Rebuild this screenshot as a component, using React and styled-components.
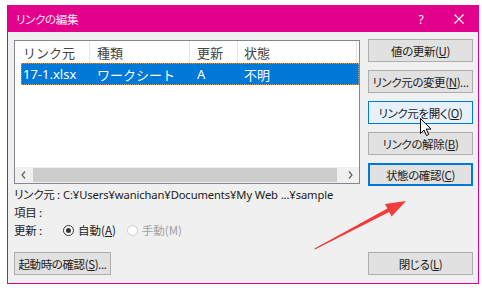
import React from "react";
import styled, { createGlobalStyle } from "styled-components";

const Global = createGlobalStyle`
  html, body { margin: 0; padding: 0; background: #ffffff; }
  body { width: 482px; height: 288px; overflow: hidden; font-family: "Noto Sans", "Noto Sans CJK JP", sans-serif; }
  * { box-sizing: border-box; }
`;

const Page = styled.div`
  position: relative;
  width: 482px;
  height: 288px;
  padding: 5px 3px 0 7px;
`;

const Dialog = styled.div`
  width: 472px;
  height: 279px;
  border: 1px solid #e3008c;
  display: flex;
  flex-direction: column;
  background: #f0f0f0;
`;

const TitleBar = styled.div`
  height: 26px;
  flex: none;
  background: #e3008c;
  display: flex;
  align-items: center;
  padding: 0 4px 0 8px;
`;

const Title = styled.div`
  flex: 1;
  color: #ffe8f5;
  font-family: "Noto Sans CJK JP", sans-serif;
  font-feature-settings: "palt";
  font-size: 11.5px;
  letter-spacing: -0.3px;
`;

const TitleButton = styled.div`
  width: 30px;
  height: 26px;
  display: flex;
  align-items: center;
  justify-content: center;
  color: #ffffff;
  font-family: "Noto Sans", sans-serif;
  font-size: 12px;
  margin-left: ${(p) => p.$gap || 0}px;
`;

const Body = styled.div`
  flex: 1;
  display: flex;
  gap: 8px;
  padding: 7px 5px 8px 6px;
`;

const LeftCol = styled.div`
  width: 346px;
  display: flex;
  flex-direction: column;
`;

const RightCol = styled.div`
  width: 105px;
  display: flex;
  flex-direction: column;
  gap: 8px;
`;

const ListBox = styled.div`
  margin-top: 1px;
  height: 144px;
  border: 1px solid #828790;
  background: #ffffff;
  display: flex;
  flex-direction: column;
  font-family: "Noto Sans", "Noto Sans CJK JP", sans-serif;
  font-size: 13px;
`;

const HeaderRow = styled.div`
  display: grid;
  grid-template-columns: 75px 100px 48px 119px;
  height: 22px;
  flex: none;
`;

const HeaderCell = styled.div`
  padding-left: ${(p) => p.$pad}px;
  border-right: 1px solid #e5e5e5;
  color: #444444;
  display: flex;
  align-items: center;
  white-space: nowrap;
`;

const DataRow = styled.div`
  display: grid;
  grid-template-columns: 69px 100px 48px 119px;
  height: 22px;
  margin-left: 6px;
  flex: none;
  background: #0078d7;
  outline: 1px dotted #c8955a;
  outline-offset: -1px;
  color: #ffffff;
`;

const DataCell = styled.div`
  padding-left: ${(p) => p.$pad}px;
  display: flex;
  align-items: center;
  white-space: nowrap;
`;

const Spacer = styled.div`
  flex: 1;
`;

const HScroll = styled.div`
  height: 16px;
  flex: none;
  display: flex;
  align-items: center;
  background: #f0f0f0;
`;

const ScrollArrow = styled.div`
  width: 17px;
  height: 16px;
  display: flex;
  align-items: center;
  justify-content: center;
  flex: none;
`;

const ScrollThumb = styled.div`
  height: 14px;
  width: 304px;
  margin-left: 1px;
  background: #cdcdcd;
`;

const Info = styled.div`
  margin-top: 1px;
  display: flex;
  flex-direction: column;
  font-size: 12px;
  color: #1a1a1a;
`;

const InfoRow = styled.div`
  height: 18px;
  display: flex;
  align-items: center;
  white-space: nowrap;
`;

const Label = styled.span`
  width: 49px;
  flex: none;
  font-family: "Noto Sans CJK JP", sans-serif;
  font-feature-settings: "palt";
  font-size: 11.5px;
  letter-spacing: -0.2px;
`;

const PathText = styled.span`
  font-family: "Noto Sans", "Noto Sans CJK JP", sans-serif;
  font-size: 11.2px;
  letter-spacing: -0.1px;
`;

const Radio = styled.span`
  width: 11px;
  height: 11px;
  border-radius: 50%;
  border: 1px solid ${(p) => (p.$disabled ? "#cccccc" : "#333333")};
  background: #ffffff;
  display: flex;
  align-items: center;
  justify-content: center;
  flex: none;
  margin-left: ${(p) => p.$ml || 0}px;
  &::after {
    content: "";
    width: 5px;
    height: 5px;
    border-radius: 50%;
    background: ${(p) => (p.$checked ? "#333333" : "transparent")};
  }
`;

const RadioText = styled.span`
  margin-left: 4px;
  font-family: "Noto Sans CJK JP", sans-serif;
  font-feature-settings: "palt";
  font-size: 11.5px;
  color: ${(p) => (p.$disabled ? "#a0a0a0" : "#1a1a1a")};
`;

const Button = styled.div`
  height: 23px;
  flex: none;
  width: ${(p) => p.$w || "auto"};
  background: ${(p) => (p.$hover ? "#e5f1fb" : "#e1e1e1")};
  border: 1px solid ${(p) => (p.$hover || p.$default ? "#0078d7" : "#adadad")};
  box-shadow: ${(p) => (p.$default ? "inset 0 0 0 1px #0078d7" : "none")};
  display: flex;
  align-items: center;
  justify-content: center;
  font-family: "Noto Sans CJK JP", sans-serif;
  font-feature-settings: "palt";
  font-size: 11.5px;
  letter-spacing: -0.4px;
  color: #1a1a1a;
  white-space: nowrap;
  margin-top: ${(p) => (p.$push ? "auto" : "0")};
`;

const StartupButton = styled(Button)`
  margin-top: 13px;
  width: 97px;
`;

const U = styled.span`
  text-decoration: underline;
  text-underline-offset: 1px;
`;

const Overlay = styled.svg`
  position: absolute;
  left: 0;
  top: 0;
  pointer-events: none;
`;

const Chevron = ({ dir }) => (
  <svg width="5" height="8" viewBox="0 0 5 8">
    <path
      d={dir === "left" ? "M4 0.5 L1 4 L4 7.5" : "M1 0.5 L4 4 L1 7.5"}
      fill="none"
      stroke="#606060"
      strokeWidth="1.2"
    />
  </svg>
);

export default function App() {
  return (
    <Page>
      <Global />
      <Dialog>
        <TitleBar>
          <Title>リンクの編集</Title>
          <TitleButton>?</TitleButton>
          <TitleButton $gap={8}>
            <svg width="10" height="10" viewBox="0 0 10 10">
              <path d="M0.5 0.5 L9.5 9.5 M9.5 0.5 L0.5 9.5" stroke="#ffffff" strokeWidth="1.1" />
            </svg>
          </TitleButton>
        </TitleBar>
        <Body>
          <LeftCol>
            <ListBox>
              <HeaderRow>
                <HeaderCell $pad={8}>リンク元</HeaderCell>
                <HeaderCell $pad={7}>種類</HeaderCell>
                <HeaderCell $pad={7}>更新</HeaderCell>
                <HeaderCell $pad={6}>状態</HeaderCell>
              </HeaderRow>
              <DataRow>
                <DataCell $pad={2}>17-1.xlsx</DataCell>
                <DataCell $pad={7}>ワークシート</DataCell>
                <DataCell $pad={7}>A</DataCell>
                <DataCell $pad={6}>不明</DataCell>
              </DataRow>
              <Spacer />
              <HScroll>
                <ScrollArrow><Chevron dir="left" /></ScrollArrow>
                <ScrollThumb />
                <Spacer />
                <ScrollArrow><Chevron dir="right" /></ScrollArrow>
              </HScroll>
            </ListBox>
            <Info>
              <InfoRow>
                <Label>リンク元 :</Label>
                <PathText>C:¥Users¥wanichan¥Documents¥My Web ...¥sample</PathText>
              </InfoRow>
              <InfoRow>
                <Label>項目 :</Label>
              </InfoRow>
              <InfoRow>
                <Label>更新 :</Label>
                <Radio $checked />
                <RadioText>自動(<U>A</U>)</RadioText>
                <Radio $disabled $ml={11} />
                <RadioText $disabled>手動(M)</RadioText>
              </InfoRow>
            </Info>
            <StartupButton>起動時の確認(<U>S</U>)...</StartupButton>
          </LeftCol>
          <RightCol>
            <Button>値の更新(<U>U</U>)</Button>
            <Button>リンク元の変更(<U>N</U>)...</Button>
            <Button $hover>リンク元を開く(<U>O</U>)</Button>
            <Button>リンクの解除(<U>B</U>)</Button>
            <Button $default>状態の確認(<U>C</U>)</Button>
            <Button $push>閉じる(<U>L</U>)</Button>
          </RightCol>
        </Body>
      </Dialog>
      <Overlay width="482" height="288" viewBox="0 0 482 288">
        <polygon
          points="315,249.5 389.2,212.1 391.6,216.5 406,201 385,204.1 387.4,208.5 314.5,248.5"
          fill="#f23c3c"
        />
        <g transform="translate(420.5 118.5)">
          <path
            d="M0 0 L0 15 L3.5 11.5 L6 17 L8.2 16 L5.8 10.6 L10.5 10.6 Z"
            fill="#ffffff"
            stroke="#000000"
            strokeWidth="1"
            strokeLinejoin="round"
          />
        </g>
      </Overlay>
    </Page>
  );
}
